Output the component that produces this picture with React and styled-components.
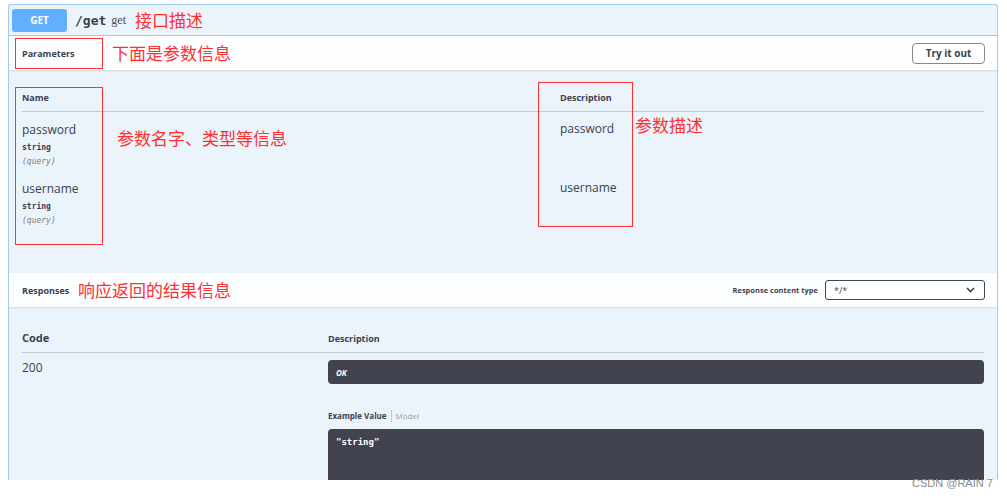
import React from 'react'
import styled, { createGlobalStyle } from 'styled-components'

const GlobalStyle = createGlobalStyle`
  html, body { margin: 0; padding: 0; background: #fff; }
  body { font-family: "Open Sans", "Noto Sans", sans-serif; color: #3b4151; }
`

const params = [
  { name: 'password', type: 'string', where: '(query)', desc: 'password' },
  { name: 'username', type: 'string', where: '(query)', desc: 'username' },
]

function App() {
  return (
    <Page>
      <GlobalStyle />
      <Block>
        <Summary>
          <Method>GET</Method>
          <Path>/get</Path>
          <SummaryDesc>get</SummaryDesc>
          <Note $ml={9}>接口描述</Note>
        </Summary>

        {/* Parameters */}
        <SectionHeader>
          <SectionTitle $w={90}>Parameters</SectionTitle>
          <Note>下面是参数信息</Note>
          <Spacer />
          <TryButton>Try it out</TryButton>
        </SectionHeader>
        <ParamsBody>
          <ParamTable>
            <HeadCell $size={9} $pt={22}>Name</HeadCell>
            <HeadCell $size={9} $pt={22}>Description</HeadCell>
            {params.map(p => (
              <React.Fragment key={p.name}>
                <NameCell>
                  <ParamName>{p.name}</ParamName>
                  <ParamType>{p.type}</ParamType>
                  <ParamIn>{p.where}</ParamIn>
                </NameCell>
                <DescCell>{p.desc}</DescCell>
              </React.Fragment>
            ))}
          </ParamTable>
        </ParamsBody>

        {/* Responses */}
        <SectionHeader>
          <SectionTitle $w={56}>Responses</SectionTitle>
          <Note>响应返回的结果信息</Note>
          <Spacer />
          <ContentLabel>Response content type</ContentLabel>
          <Select>
            <span>*/*</span>
            <svg width="9" height="6" viewBox="0 0 9 6">
              <polyline points="1,1 4.5,4.5 8,1" fill="none" stroke="#3b4151" strokeWidth="1.6" />
            </svg>
          </Select>
        </SectionHeader>
        <ResponsesBody>
          <RespTable>
            <HeadCell $size={11} $pt={24}>Code</HeadCell>
            <HeadCell $size={9} $pt={26}>Description</HeadCell>
            <CodeCell>200</CodeCell>
            <div>
              <DarkBox $h={24}><OkText>OK</OkText></DarkBox>
              <ExampleTabs>
                <strong>Example Value</strong>
                <TabSep />
                <span>Model</span>
              </ExampleTabs>
              <DarkBox $h={60}><CodeText>"string"</CodeText></DarkBox>
            </div>
          </RespTable>
        </ResponsesBody>

        {/* annotations */}
        <RedBox style={{ left: 6, top: 33, width: 88, height: 31 }} />
        <RedBox style={{ left: 6, top: 82, width: 88, height: 158 }} />
        <RedBox style={{ left: 529, top: 77, width: 95, height: 145 }} />
        <FloatNote style={{ left: 108, top: 123 }}>参数名字、类型等信息</FloatNote>
        <FloatNote style={{ left: 626, top: 110 }}>参数描述</FloatNote>
      </Block>
      <Watermark>CSDN @RAIN 7</Watermark>
    </Page>
  )
}

export default App

const Page = styled.div`
  position: relative;
  width: 1007px;
  height: 496px;
  overflow: hidden;
  padding: 4px 0 0 8px;
  box-sizing: border-box;
`

const Block = styled.div`
  position: relative;
  width: 990px;
  height: 476px;
  box-sizing: border-box;
  border: 1px solid #9fcaf5;
  border-bottom: none;
  border-radius: 3px 3px 0 0;
  background: #ebf3fb;
  overflow: hidden;
`

const Summary = styled.div`
  display: flex;
  align-items: center;
  height: 30px;
  padding: 0 3px;
  border-bottom: 1px solid #9fcaf5;
`

const Method = styled.div`
  width: 55px;
  height: 23px;
  border-radius: 3px;
  background: #61affe;
  color: #fff;
  font: bold 10px "Open Sans", sans-serif;
  display: flex;
  align-items: center;
  justify-content: center;
`

const Path = styled.span`
  margin-left: 8px;
  font: bold 13px "DejaVu Sans Mono", monospace;
  color: #3b4151;
`

const SummaryDesc = styled.span`
  margin-left: 5px;
  font: 12px "Liberation Serif", serif;
  color: #4a5060;
`

const Note = styled.span`
  margin-left: ${p => p.$ml || 0}px;
  font: 17px "Noto Sans CJK SC", sans-serif;
  color: #ff3030;
  line-height: 20px;
`

const FloatNote = styled(Note)`
  position: absolute;
`

const SectionHeader = styled.div`
  display: flex;
  align-items: center;
  height: 34px;
  padding: 0 12px 0 13px;
  background: rgba(255, 255, 255, 0.85);
  box-shadow: 0 1px 2px rgba(0, 0, 0, 0.1);
  position: relative;
`

const SectionTitle = styled.div`
  width: ${p => p.$w}px;
  font: bold 9px "Open Sans", sans-serif;
  color: #3b4151;
`

const Spacer = styled.div`
  flex: 1;
`

const TryButton = styled.button`
  width: 73px;
  height: 21px;
  border: 1.5px solid #888;
  border-radius: 4px;
  background: #fff;
  font: bold 10px "Open Sans", sans-serif;
  color: #3b4151;
  padding: 0;
`

const ParamsBody = styled.div`
  height: 203px;
  padding: 0 13px;
`

const ParamTable = styled.div`
  display: grid;
  grid-template-columns: 538px 1fr;
`

const HeadCell = styled.div`
  font: bold ${p => p.$size}px "Open Sans", sans-serif;
  line-height: ${p => p.$size + 3}px;
  padding-top: ${p => p.$pt}px;
  padding-bottom: 7px;
  box-sizing: border-box;
  border-bottom: 1px solid #c1c9d5;
  color: #3b4151;
`

const NameCell = styled.div`
  height: 59px;
  padding-top: 10px;
  box-sizing: border-box;
`

const ParamName = styled.div`
  font: 12px "Open Sans", sans-serif;
  line-height: 16px;
  color: #3b4151;
`

const ParamType = styled.div`
  margin-top: 4px;
  font: bold 8px "DejaVu Sans Mono", monospace;
  line-height: 11px;
  color: #3b4151;
`

const ParamIn = styled.div`
  margin-top: 3px;
  font: italic 8px "DejaVu Sans Mono", monospace;
  line-height: 11px;
  color: #808080;
`

const DescCell = styled.div`
  padding-top: 9px;
  font: 12px "Open Sans", sans-serif;
  line-height: 16px;
  color: #3b4151;
`

const ContentLabel = styled.span`
  font: bold 7.5px "Open Sans", sans-serif;
  color: #3b4151;
  margin-right: 7px;
`

const Select = styled.div`
  width: 160px;
  height: 20px;
  box-sizing: border-box;
  border: 1px solid #41444e;
  border-radius: 3px;
  background: #fff;
  display: flex;
  align-items: center;
  justify-content: space-between;
  padding: 0 9px 0 8px;
  font: 9px "Open Sans", sans-serif;
  color: #3b4151;
`

const ResponsesBody = styled.div`
  padding: 0 13px;
`

const RespTable = styled.div`
  display: grid;
  grid-template-columns: 306px 1fr;
`

const CodeCell = styled.div`
  padding-top: 7px;
  font: 12px "Open Sans", sans-serif;
  line-height: 16px;
  color: #3b4151;
`

const DarkBox = styled.div`
  margin-top: 7px;
  height: ${p => p.$h}px;
  background: #41444e;
  border-radius: 4px;
  display: flex;
  align-items: ${p => (p.$h > 30 ? 'flex-start' : 'center')};
  padding: 0 8px;
`

const OkText = styled.span`
  font: italic bold 8px "Open Sans", sans-serif;
  color: #fff;
`

const CodeText = styled.span`
  margin-top: 8px;
  font: bold 9px "DejaVu Sans Mono", monospace;
  color: #fff;
`

const ExampleTabs = styled.div`
  margin-top: 26px;
  display: flex;
  align-items: center;
  font: 8px "Open Sans", sans-serif;
  line-height: 12px;
  color: #9aa0ab;
  strong { color: #3b4151; }
`

const TabSep = styled.span`
  width: 1px;
  height: 12px;
  background: #c1c9d5;
  margin: 0 4px;
`

const RedBox = styled.div`
  position: absolute;
  box-sizing: border-box;
  border: 1.5px solid #ff3030;
`

const Watermark = styled.div`
  position: absolute;
  left: 912px;
  top: 477px;
  font: 11px "Liberation Sans", sans-serif;
  color: #8c8c8c;
`
